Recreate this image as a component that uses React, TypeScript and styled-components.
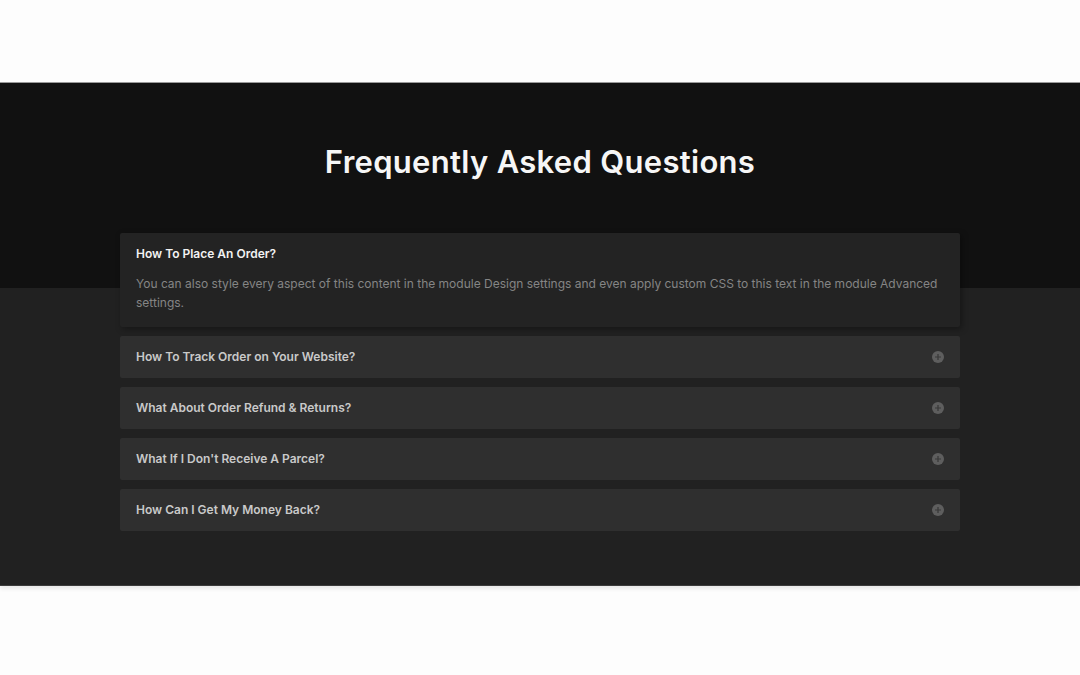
import React, { useState } from 'react'
import styled, { createGlobalStyle } from 'styled-components'

const GlobalStyle = createGlobalStyle`
  html, body {
    margin: 0;
    padding: 0;
    background: #fdfdfd;
    font-family: Inter, 'Noto Sans', sans-serif;
  }
`;

const Page = styled.div`
  padding-top: 82px;
  min-height: 675px;
  box-sizing: border-box;
`;

const FaqSection = styled.section`
  background: linear-gradient(to bottom, #111111 0, #111111 205px, #212121 205px);
  border-top: 1px solid #9a9a9a;
  border-bottom: 1px solid #3c3c3c;
  box-shadow: 0 3px 4px rgba(0, 0, 0, 0.08);
  padding: 61px 0 54px;
  display: flex;
  flex-direction: column;
  align-items: center;
`;

const Title = styled.h2`
  font-family: Inter, 'Noto Sans', sans-serif;
  font-weight: 600;
  font-size: 31px;
  line-height: 36px;
  letter-spacing: 0.3px;
  color: #f6f6f6;
  margin: 0 0 53px;
`;

const List = styled.div`
  width: 840px;
  display: flex;
  flex-direction: column;
  gap: 9px;
`;

const Item = styled.div<{ $open: boolean }>`
  background: ${p => (p.$open ? '#232323' : '#2f2f2f')};
  box-shadow: ${p => (p.$open ? '2px 2px 6px rgba(0, 0, 0, 0.35)' : 'none')};
  border-radius: 2px;
  padding: ${p => (p.$open ? '12px 16px 15px' : '12px 16px')};
`;

const Header = styled.div`
  display: flex;
  align-items: center;
  justify-content: space-between;
  cursor: pointer;
`;

const Question = styled.h3<{ $open: boolean }>`
  margin: 0;
  font-family: Inter, 'Noto Sans', sans-serif;
  font-weight: 600;
  font-size: 12px;
  line-height: 18px;
  color: ${p => (p.$open ? '#f2f2f2' : '#c9c9c9')};
`;

const Answer = styled.p`
  margin: 11px 0 0;
  font-family: Inter, 'Noto Sans', sans-serif;
  font-weight: 400;
  font-size: 12px;
  line-height: 19px;
  color: #858585;
`;

const Toggle = styled.span`
  width: 12px;
  height: 12px;
  display: flex;
`;

const PlusCircle = () => (
  <svg width="12" height="12" viewBox="0 0 12 12">
    <circle cx="6" cy="6" r="6" fill="#5e5e5e" />
    <path d="M6 3v6M3 6h6" stroke="#383838" strokeWidth="1.2" />
  </svg>
);

const faqs = [
  {
    id: 1,
    question: 'How To Place An Order?',
    answer:
      'You can also style every aspect of this content in the module Design settings and even apply custom CSS to this text in the module Advanced settings.',
  },
  { id: 2, question: 'How To Track Order on Your Website?', answer: '' },
  { id: 3, question: 'What About Order Refund & Returns?', answer: '' },
  { id: 4, question: "What If I Don't Receive A Parcel?", answer: '' },
  { id: 5, question: 'How Can I Get My Money Back?', answer: '' },
];

export default function App() {
  const [openId, setOpenId] = useState<number | null>(1);

  return (
    <>
      <GlobalStyle />
      <Page>
        <FaqSection>
          <Title>Frequently Asked Questions</Title>
          <List>
            {faqs.map(faq => {
              const open = openId === faq.id;
              return (
                <Item key={faq.id} $open={open}>
                  <Header onClick={() => setOpenId(open ? null : faq.id)}>
                    <Question $open={open}>{faq.question}</Question>
                    {!open && (
                      <Toggle>
                        <PlusCircle />
                      </Toggle>
                    )}
                  </Header>
                  {open && <Answer>{faq.answer}</Answer>}
                </Item>
              );
            })}
          </List>
        </FaqSection>
      </Page>
    </>
  );
}
